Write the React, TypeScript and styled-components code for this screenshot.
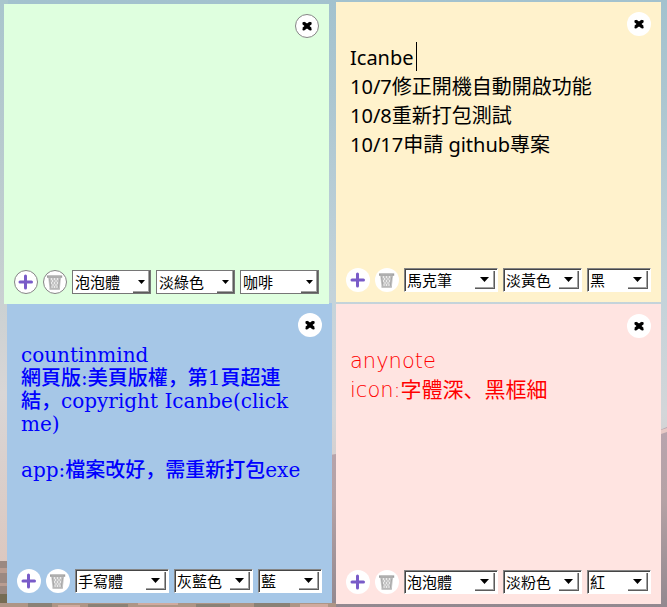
import React, { useState } from "react";
import styled, { createGlobalStyle, css } from "styled-components";

const GlobalStyle = createGlobalStyle`
  *, *::before, *::after { box-sizing: border-box; }
  html, body { margin: 0; height: 100%; }
  #root { height: 100%; }
`;

const Desktop = styled.main`
  position: relative;
  min-height: 100%;
  overflow: hidden;
  background: linear-gradient(180deg, #a3c2ce 0%, #abc6d0 15%, #c3d3da 48%, #d3d6d9 68%, #d8ccca 80%);
`;

const Scenery = styled.svg`
  position: absolute;
  inset: 0;
  width: 100%;
  height: 100%;
`;

const NoteWindow = styled.section<{ $x: number; $y: number; $color: string; $front?: boolean }>`
  position: absolute;
  left: ${(p) => p.$x}px;
  top: ${(p) => p.$y}px;
  z-index: ${(p) => (p.$front ? 2 : 1)};
  display: flex;
  flex-direction: column;
  width: 325px;
  height: 300px;
  padding: 10px;
  background: ${(p) => p.$color};
`;

const TitleBar = styled.header`
  display: flex;
  justify-content: flex-end;
`;

const RoundButton = styled.button<{ $outlined?: boolean }>`
  display: flex;
  align-items: center;
  justify-content: center;
  flex: none;
  width: 24px;
  height: 24px;
  padding: 0;
  border: ${(p) => (p.$outlined ? "1px solid #858585" : "0")};
  border-radius: 50%;
  background: #fff;
  cursor: pointer;
`;

type Face = "marker" | "bubble" | "hand";

const faces = {
  marker: css`
    padding-top: 7px;
    font: 400 20px/29px "Noto Sans", "Noto Sans CJK JP", sans-serif;
  `,
  bubble: css`
    padding-top: 9px;
    font: 400 21px/29px "DejaVu Sans Light", "Noto Sans CJK JP", sans-serif;
  `,
  hand: css`
    padding-top: 7px;
    font: 500 20px/23px "DejaVu Serif", "Noto Sans CJK JP", serif;
  `,
};

const Body = styled.div`
  position: relative;
  display: flex;
  flex: 1;
  padding: 0 0 8px 4px;
`;

const NoteText = styled.textarea<{ $face: Face; $ink: string }>`
  flex: 1;
  min-width: 0;
  padding: 0;
  border: 0;
  outline: 0;
  resize: none;
  overflow: hidden;
  background: transparent;
  color: ${(p) => p.$ink};
  ${(p) => faces[p.$face]}
`;

const Caret = styled.span`
  position: absolute;
  left: 70px;
  top: 6px;
  width: 1px;
  height: 29px;
  background: #000;
`;

const Toolbar = styled.footer`
  display: flex;
  gap: 5px;
`;

const SelectFrame = styled.span<{ $width: number; $flat?: boolean }>`
  position: relative;
  display: block;
  flex: none;
  width: ${(p) => p.$width}px;
  height: 24px;
  background: #fff;
  ${(p) =>
    p.$flat
      ? css`
          border: 1px solid #767676;
        `
      : css`
          border: 1px solid #fff;
          border-top-color: #858585;
          border-left-color: #858585;
          box-shadow: inset 1px 1px 0 #454545;
        `}
`;

const SelectInput = styled.select`
  display: block;
  width: 100%;
  height: 100%;
  padding: 0 0 0 2px;
  border: 0;
  outline: 0;
  border-radius: 0;
  appearance: none;
  background: transparent;
  color: #000;
  font: 400 15px/22px "Noto Sans CJK TC", sans-serif;
`;

const DropMark = styled.span<{ $flat?: boolean }>`
  position: absolute;
  right: ${(p) => (p.$flat ? 0 : 2)}px;
  bottom: ${(p) => (p.$flat ? 0 : 2)}px;
  display: flex;
  align-items: center;
  justify-content: center;
  width: ${(p) => (p.$flat ? 17 : 20)}px;
  height: ${(p) => (p.$flat ? 22 : 18)}px;
  border: solid #5c5c5c;
  border-width: 0 1px 1px 0;
  box-shadow: inset -1px -1px 0 #a3a3a3;
  pointer-events: none;
`;

function CloseIcon() {
  return (
    <svg width="12" height="12" viewBox="0 0 12 12" aria-hidden="true">
      <path d="M2.6 3l6.8 6M9.4 3l-6.8 6" stroke="#000" strokeWidth="3.4" />
      <path d="M4.5 6h3" stroke="#000" strokeWidth="5" />
      <path d="M2.6 3.2h.1M9.4 3.2h.1M2.6 9.2h.1M9.4 9.2h.1" stroke="#000" strokeWidth="2.4" strokeLinecap="round" />
    </svg>
  );
}

function PlusIcon() {
  return (
    <svg width="16" height="16" viewBox="0 0 16 16" aria-hidden="true">
      <path d="M7.5 2v12M2 8h11.5" stroke="#795bc8" strokeWidth="3" strokeLinecap="round" />
    </svg>
  );
}

function BasketIcon() {
  return (
    <svg width="16" height="16" viewBox="0 0 16 16" aria-hidden="true">
      <path d="M1.2 3.5h12.8L12.8 15.5H2.6z" fill="#c4c4c4" />
      <path d="M2.4 4.5l1.6 9.5M12.8 4.5l-1.6 9.5" stroke="#a6a6a6" strokeWidth="1" />
      <path
        d="M4 5h1M7 5h1M10 5h1M5 7h1M8.5 7h1M4 9h1M7 9h1M10 9h1M5.5 11h1M8.5 11h1M4.5 13h1M7 13h1M9.5 13h1"
        stroke="#f8f8f8"
        strokeWidth="1.6"
      />
      <path d="M0 1.4h15.2v2.4H0z" fill="#a0a0a0" />
      <path d="M1.5 2.2h12" stroke="#bdbdbd" strokeWidth=".8" />
      <path d="M2.6 15h10.2" stroke="#adadad" />
    </svg>
  );
}

function Scene() {
  return (
    <Scenery viewBox="0 0 667 607" preserveAspectRatio="none" aria-hidden="true">
      <defs>
        <linearGradient id="leftSky" x1="0" y1="0" x2="0" y2="1">
          <stop offset="0" stopColor="#a9c5cd" />
          <stop offset=".45" stopColor="#c3ced0" />
          <stop offset=".7" stopColor="#d9d6d6" />
          <stop offset="1" stopColor="#dcc8c0" />
        </linearGradient>
        <linearGradient id="ridge" x1="0" y1="0" x2="0" y2="1">
          <stop offset="0" stopColor="#b8a4ae" />
          <stop offset=".4" stopColor="#b5a2a5" />
          <stop offset="1" stopColor="#92888f" />
        </linearGradient>
      </defs>
      <path d="M0 0h8v562H0z" fill="url(#leftSky)" />
      <path d="M330 455l60-10h200l70-15 7-3v180H330z" fill="url(#ridge)" />
      <path d="M661 430l6-2v4l-6 2z" fill="#e8c9c6" />
      <path d="M0 561h8v46H0z" fill="#9b8982" />
      <path d="M0 568h8v5H0zM0 583h8v3H0z" fill="#b99d92" />
      <path d="M0 594h8v13H0z" fill="#756c54" />
      <path d="M0 603h336v4H0z" fill="#ae9586" />
      <path d="M28 603h24v4H28zM88 604h40v3H88zM196 604h34v3h-34zM254 603h36v4h-36z" fill="#8a8176" />
      <path d="M58 605h22v2H58zM138 603h40v2h-40zM300 604h28v3h-28z" fill="#d0aa9e" />
    </Scenery>
  );
}

interface PickerProps {
  label: string;
  width: number;
  value: string;
  options: string[];
  flat?: boolean;
}

function Picker({ label, width, value, options, flat }: PickerProps) {
  return (
    <SelectFrame $width={width} $flat={flat}>
      <SelectInput aria-label={label} defaultValue={value}>
        {options.map((o) => (
          <option key={o}>{o}</option>
        ))}
      </SelectInput>
      <DropMark $flat={flat}>
        <svg width={flat ? 7 : 9} height={flat ? 4 : 5} viewBox="0 0 9 5" aria-hidden="true">
          <path d="M0 0h9L4.5 5z" fill="#000" />
        </svg>
      </DropMark>
    </SelectFrame>
  );
}

interface Note {
  id: string;
  x: number;
  y: number;
  color: string;
  ink: string;
  face: Face;
  text: string;
  fontName: string;
  paperName: string;
  inkName: string;
  flat?: boolean;
  caret?: boolean;
}

const notes: Note[] = [
  {
    id: "green", x: 4, y: 4, color: "#dfffdf", ink: "#5a3a22", face: "bubble", text: "",
    fontName: "泡泡體", paperName: "淡綠色", inkName: "咖啡", flat: true,
  },
  {
    id: "yellow", x: 336, y: 2, color: "#fff2cc", ink: "#000", face: "marker",
    text: "Icanbe\n10/7修正開機自動開啟功能\n10/8重新打包測試\n10/17申請 github專案",
    fontName: "馬克筆", paperName: "淡黃色", inkName: "黑", caret: true,
  },
  {
    id: "blue", x: 7, y: 303, color: "#a6c7e7", ink: "#0000ff", face: "hand",
    text: "countinmind\n網頁版:美頁版權，第1頁超連\n結，copyright Icanbe(click\nme)\n\napp:檔案改好，需重新打包exe",
    fontName: "手寫體", paperName: "灰藍色", inkName: "藍",
  },
  {
    id: "pink", x: 336, y: 304, color: "#ffe4e1", ink: "#ff0000", face: "bubble",
    text: "anynote\nicon:字體深、黑框細",
    fontName: "泡泡體", paperName: "淡粉色", inkName: "紅",
  },
];

const fontNames = ["泡泡體", "馬克筆", "手寫體"];
const paperNames = ["淡綠色", "淡黃色", "灰藍色", "淡粉色"];
const inkNames = ["咖啡", "黑", "藍", "紅"];

function StickyNote({ note }: { note: Note }) {
  const [text, setText] = useState(note.text);
  const { flat } = note;
  return (
    <NoteWindow $x={note.x} $y={note.y} $color={note.color} $front={flat}>
      <TitleBar>
        <RoundButton type="button" aria-label="關閉" $outlined={flat}>
          <CloseIcon />
        </RoundButton>
      </TitleBar>
      <Body>
        <NoteText
          aria-label="便條內容"
          spellCheck={false}
          $face={note.face}
          $ink={note.ink}
          value={text}
          onChange={(e) => setText(e.target.value)}
        />
        {note.caret && <Caret />}
      </Body>
      <Toolbar>
        <RoundButton type="button" aria-label="新增" $outlined={flat}>
          <PlusIcon />
        </RoundButton>
        <RoundButton type="button" aria-label="刪除" $outlined={flat}>
          <BasketIcon />
        </RoundButton>
        <Picker label="字體" width={flat ? 79 : 94} value={note.fontName} options={fontNames} flat={flat} />
        <Picker label="底色" width={79} value={note.paperName} options={paperNames} flat={flat} />
        <Picker label="文字顏色" width={flat ? 79 : 64} value={note.inkName} options={inkNames} flat={flat} />
      </Toolbar>
    </NoteWindow>
  );
}

export default function App() {
  return (
    <>
      <GlobalStyle />
      <Desktop>
        <Scene />
        {notes.map((n) => (
          <StickyNote key={n.id} note={n} />
        ))}
      </Desktop>
    </>
  );
}
